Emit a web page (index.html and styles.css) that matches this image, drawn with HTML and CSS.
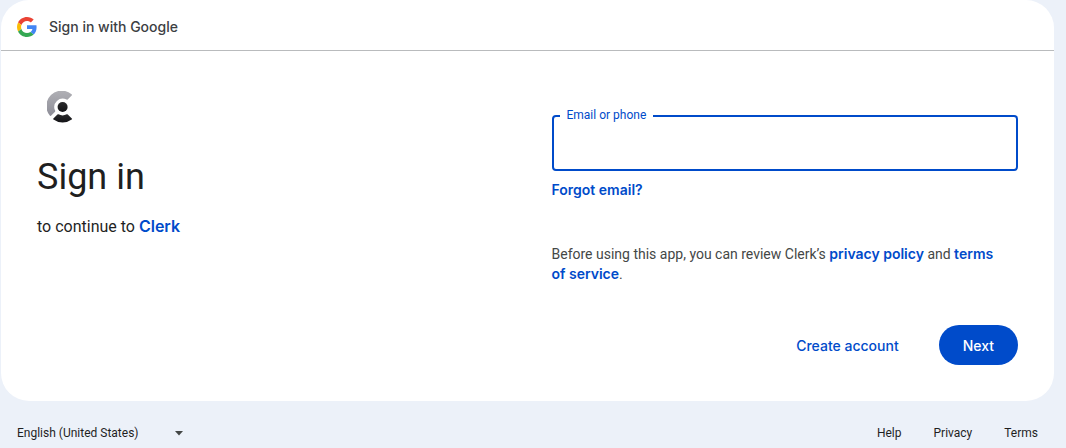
FILE: index.html
```
<!DOCTYPE html>
<html lang="en">
<head>
    <meta charset="UTF-8">
    <meta name="viewport" content="width=device-width, initial-scale=1.0">
    <title>Sign in - Google Accounts</title>
    <link rel="stylesheet" href="styles.css">
</head>
<body>
    <main class="card">
        <header class="card-header">
            <svg class="google-logo" viewBox="0 0 48 48" aria-hidden="true">
                <path fill="#EA4335" d="M24 9.5c3.54 0 6.71 1.22 9.21 3.6l6.85-6.85C35.9 2.38 30.47 0 24 0 14.62 0 6.51 5.38 2.56 13.22l7.98 6.19C12.43 13.72 17.74 9.5 24 9.5z"/>
                <path fill="#4285F4" d="M46.98 24.55c0-1.57-.15-3.09-.38-4.55H24v9.02h12.94c-.58 2.96-2.26 5.48-4.78 7.18l7.73 6c4.51-4.18 7.09-10.36 7.09-17.65z"/>
                <path fill="#FBBC05" d="M10.53 28.59c-.48-1.45-.76-2.99-.76-4.59s.27-3.14.76-4.59l-7.98-6.19C.92 16.46 0 20.12 0 24c0 3.88.92 7.54 2.56 10.78l7.97-6.19z"/>
                <path fill="#34A853" d="M24 48c6.48 0 11.93-2.13 15.89-5.81l-7.73-6c-2.15 1.45-4.92 2.3-8.16 2.3-6.26 0-11.57-4.22-13.47-9.91l-7.98 6.19C6.51 42.62 14.62 48 24 48z"/>
            </svg>
            <span>Sign in with Google</span>
        </header>

        <div class="content">
            <section class="intro">
                <svg class="app-logo" viewBox="0 0 32 32" aria-hidden="true">
                    <defs>
                        <linearGradient id="arc" x1="0" y1="0" x2="0" y2="1">
                            <stop offset="0" stop-color="#b0b0b5"/>
                            <stop offset="1" stop-color="#8e8e98"/>
                        </linearGradient>
                        <linearGradient id="dark" x1="0" y1="0" x2="0" y2="1">
                            <stop offset="0" stop-color="#2b2b2d"/>
                            <stop offset="1" stop-color="#131316"/>
                        </linearGradient>
                    </defs>
                    <path fill="url(#arc)" d="M24.6 3.3a.8.8 0 0 1 .1 1.2l-4 4a.9.9 0 0 1-1.1.1A8.400 8.400 0 0 0 8.100 19.600a.9.9 0 0 1-.1 1.100l-4 4a.8.8 0 0 1-1.200-.1A15.300 15.300 0 0 1 24.600 3.300z"/>
                    <circle fill="url(#dark)" cx="15.600" cy="16" r="5"/>
                    <path fill="url(#dark)" d="M24.700 28.600a.8.8 0 0 0 .1-1.200l-4-4a.9.9 0 0 0-1.100-.1 8.400 8.400 0 0 1-8.200 0 .9.9 0 0 0-1.100.1l-4 4a.8.8 0 0 0 .1 1.200 15.300 15.300 0 0 0 18.200 0z"/>
                </svg>
                <h1>Sign in</h1>
                <p>to continue to <a href="#">Clerk</a></p>
            </section>

            <form class="signin-form">
                <div class="field">
                    <input type="text" id="identifier" autocomplete="username">
                    <label for="identifier">Email or phone</label>
                </div>
                <a class="forgot" href="#">Forgot email?</a>
                <p class="notice">Before using this app, you can review Clerk’s <a href="#">privacy policy</a> and <a href="#">terms of service</a>.</p>
                <div class="actions">
                    <button type="button" class="text-button">Create account</button>
                    <button type="button" class="next-button">Next</button>
                </div>
            </form>
        </div>
    </main>

    <footer class="footer">
        <div class="language">
            <select aria-label="Language">
                <option>English (United States)</option>
            </select>
            <svg viewBox="0 0 10 5" aria-hidden="true"><path fill="#444746" d="M1 0h8L5 4.5z"/></svg>
        </div>
        <nav>
            <a href="#">Help</a>
            <a href="#">Privacy</a>
            <a href="#">Terms</a>
        </nav>
    </footer>
</body>
</html>
```
FILE: styles.css
```
* {
    box-sizing: border-box;
}

body {
    margin: 0;
    padding: 0 12px 0 1px;
    background: #ecf1f9;
    color: #1f1f1f;
    font-family: Roboto, 'Liberation Sans', sans-serif;
    font-size: 14px;
    line-height: 20px;
}

a {
    color: #004bca;
    font-family: Inter, 'Liberation Sans', sans-serif;
    font-weight: 600;
    text-decoration: none;
}

h1,
p {
    margin: 0;
}

.card {
    background: #fff;
    border-radius: 28px;
}

.card-header {
    display: flex;
    align-items: center;
    gap: 12px;
    padding: 17px 16px 13px;
    border-bottom: 1px solid #b9bbbd;
    color: #3c4043;
    font-family: Inter, 'Liberation Sans', sans-serif;
    font-weight: 500;
}

.google-logo {
    width: 20px;
    height: 20px;
}

.content {
    display: grid;
    grid-template-columns: 1fr 1fr;
    gap: 48px;
    padding: 40px 36px 36px;
}

.app-logo {
    display: block;
    width: 32px;
    height: 32px;
    margin-left: 10px;
}

h1 {
    margin-top: 32px;
    font-size: 36px;
    font-weight: 400;
    line-height: 44px;
}

.intro p {
    margin-top: 15px;
    font-size: 16px;
    line-height: 24px;
}

.signin-form {
    padding-top: 24px;
}

.field {
    position: relative;
}

.field input {
    display: block;
    width: 100%;
    height: 56px;
    padding: 0 14px;
    border: 2px solid #004bca;
    border-radius: 4px;
    outline: none;
    font: inherit;
    font-size: 16px;
}

.field label {
    position: absolute;
    top: -8px;
    left: 8px;
    padding: 0 7px;
    background: #fff;
    color: #004bca;
    font-size: 12px;
    line-height: 16px;
}

.forgot {
    display: block;
    margin-top: 9px;
}

.notice {
    margin-top: 44px;
    padding-right: 12px;
    color: #444746;
}

.actions {
    display: flex;
    justify-content: flex-end;
    gap: 16px;
    margin-top: 41px;
}

button {
    height: 40px;
    padding: 0 24px;
    border: none;
    border-radius: 20px;
    background: none;
    color: #004bca;
    font-family: Inter, 'Liberation Sans', sans-serif;
    font-size: 14px;
    font-weight: 500;
    cursor: pointer;
}

.next-button {
    background: #004bca;
    color: #fff;
}

.footer {
    display: flex;
    justify-content: space-between;
    align-items: center;
    padding: 24px 16px 0;
    font-size: 12px;
    line-height: 16px;
}

.language {
    display: flex;
    align-items: center;
    gap: 35px;
}

.language select {
    padding: 0;
    border: none;
    background: none;
    color: inherit;
    font: inherit;
    appearance: none;
}

.language svg {
    width: 10px;
    height: 5px;
}

.footer nav {
    display: flex;
    gap: 32px;
}

.footer a {
    color: #1f1f1f;
    font-family: inherit;
    font-weight: 400;
}
```
